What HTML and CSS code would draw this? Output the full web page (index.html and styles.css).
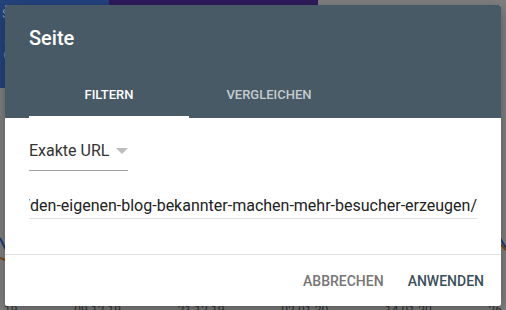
FILE: index.html
```html
<!DOCTYPE html>
<html lang="de">
<head>
    <meta charset="UTF-8">
    <meta name="viewport" content="width=device-width, initial-scale=1.0">
    <title>Seite filtern</title>
    <link rel="stylesheet" href="styles.css">
</head>
<body>
    <div class="page">
        <div class="cards">
            <div class="card card-clicks">
                <span class="card-label">Seiten</span>
                <span class="card-value">8</span>
            </div>
            <div class="card card-impressions"></div>
        </div>

        <div class="chart">
            <svg width="506" height="212" viewBox="0 0 506 212">
                <polyline points="0,150 8,166 60,120 140,140 220,110 300,150 380,120 460,140 500,150 506,160" fill="none" stroke="#1c3d78" stroke-width="2"/>
                <polyline points="0,170 14,176 80,168 160,172 240,160 320,175 400,165 495,150 506,162" fill="none" stroke="#7a4514" stroke-width="2"/>
            </svg>
        </div>

        <div class="axis">
            <span>19</span>
            <span>09.12.19</span>
            <span>21.12.19</span>
            <span>02.01.20</span>
            <span>14.01.20</span>
            <span>26</span>
        </div>
    </div>

    <div class="dialog">
        <div class="dialog-header">
            <h2 class="dialog-title">Seite</h2>
            <div class="tabs">
                <div class="tab active">Filtern</div>
                <div class="tab">Vergleichen</div>
            </div>
        </div>

        <div class="dialog-body">
            <div class="select">
                <span class="select-value">Exakte URL</span>
                <span class="select-arrow"></span>
            </div>
            <div class="url-field">
                <span>https://www.blog-beispiel.de/den-eigenen-blog-bekannter-machen-mehr-besucher-erzeugen/</span>
            </div>
        </div>

        <div class="dialog-actions">
            <button class="btn btn-cancel">Abbrechen</button>
            <button class="btn btn-apply">Anwenden</button>
        </div>
    </div>
</body>
</html>
```

FILE: styles.css
```css
body {
    margin: 0;
    font-family: Roboto, "Liberation Sans", Arial, sans-serif;
    background-color: #7f7f7f;
    width: 506px;
    height: 310px;
    overflow: hidden;
    position: relative;
}

.page {
    display: flex;
    flex-direction: column;
    height: 310px;
}

.cards {
    display: flex;
    height: 88px;
    flex-shrink: 0;
}

.card {
    width: 109px;
    box-sizing: border-box;
    padding: 14px 2px;
    display: flex;
    flex-direction: column;
}

.card-clicks {
    background-color: #23437e;
}

.card-impressions {
    width: 209px;
    background-color: #2e1a5b;
}

.card-label {
    font-size: 13px;
    color: #8b9ab8;
    line-height: 16px;
    margin-top: -8px;
}

.card-value {
    font-size: 40px;
    line-height: 44px;
    color: #8b9ab8;
    margin-top: 6px;
}

.chart {
    height: 212px;
    flex-shrink: 0;
}

.chart svg {
    display: block;
}

.axis {
    display: flex;
    justify-content: space-between;
    padding: 0 4px;
    font-size: 12px;
    color: #333;
    line-height: 14px;
    margin-top: 3px;
}

/* Dialog */
.dialog {
    position: absolute;
    left: 5px;
    top: 5px;
    width: 496px;
    background-color: #fff;
    border-radius: 2px;
    box-shadow: 0 4px 14px rgba(0, 0, 0, 0.3);
    overflow: hidden;
}

.dialog-header {
    background-color: #475a65;
    padding: 21px 24px 0 24px;
}

.dialog-title {
    margin: 0;
    font-size: 20px;
    line-height: 24px;
    font-weight: 500;
    color: #fff;
}

.tabs {
    display: flex;
    margin-top: 20px;
}

.tab {
    width: 160px;
    height: 48px;
    box-sizing: border-box;
    display: flex;
    align-items: center;
    justify-content: center;
    text-transform: uppercase;
    font-size: 13px;
    font-weight: 500;
    color: rgba(255, 255, 255, 0.7);
    border-bottom: 2px solid transparent;
    padding-top: 2px;
}

.tab.active {
    color: #fff;
    border-bottom-color: #fff;
}

.dialog-body {
    padding: 21px 24px 35px 24px;
    border-bottom: 1px solid #e0e0e0;
}

.select {
    display: flex;
    align-items: center;
    width: 99px;
    white-space: nowrap;
    font-size: 16px;
    line-height: 24px;
    color: #333;
    padding-bottom: 7px;
    border-bottom: 1px solid #9e9e9e;
}

.select-value {
    flex-shrink: 0;
}

.select-arrow {
    flex-shrink: 0;
    width: 0;
    height: 0;
    margin-left: 7px;
    border-left: 6px solid transparent;
    border-right: 6px solid transparent;
    border-top: 6px solid #bdbdbd;
}

.url-field {
    margin-top: 23px;
    display: flex;
    justify-content: flex-end;
    overflow: hidden;
    white-space: nowrap;
    font-size: 16px;
    line-height: 24px;
    color: #212121;
    border-bottom: 1px solid #e0e0e0;
}

.url-field span {
    flex-shrink: 0;
}

.dialog-actions {
    display: flex;
    justify-content: flex-end;
    gap: 8px;
    padding: 8px 9px 7px 8px;
}

.btn {
    background: none;
    border: none;
    height: 36px;
    padding: 0 8px;
    font-family: inherit;
    font-size: 14px;
    font-weight: 500;
    text-transform: uppercase;
    cursor: pointer;
}

.btn-cancel {
    color: #757575;
}

.btn-apply {
    color: #3b4f5a;
}
```
